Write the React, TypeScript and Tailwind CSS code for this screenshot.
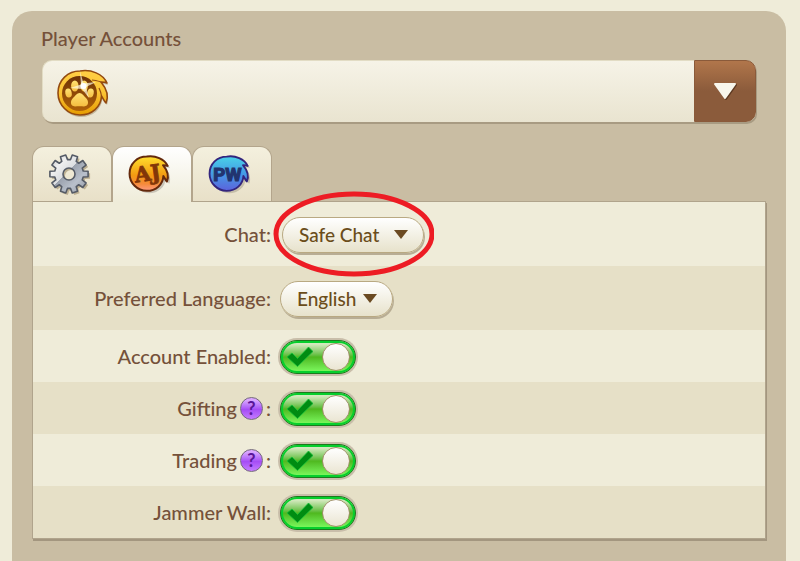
import { useState } from "react";
import type { ReactNode } from "react";

const badgePath =
  "M24 2 C35 0 47 5 51 14 C49 13 47 13 45 13 C50 19 53 27 50 34 C48 32 47 29 45.500 27 C45 38 36 46 24 46 C12 46 2 36 2 24 C2 11 12 2 24 2 Z";

function gearPath(teeth: number, outer: number, inner: number) {
  const step = (Math.PI * 2) / teeth;
  const points: string[] = [];
  for (let i = 0; i < teeth; i++) {
    const mid = i * step;
    [
      [inner, -0.33],
      [outer, -0.23],
      [outer, 0.23],
      [inner, 0.33],
    ].forEach(([r, t]) => {
      const a = mid + t * step;
      points.push(`${(r * Math.cos(a)).toFixed(2)} ${(r * Math.sin(a)).toFixed(2)}`);
    });
  }
  return `M${points.join(" L")} Z`;
}

function PawCoin() {
  return (
    <svg viewBox="0 0 54 50" className="h-[50px] w-[54px] overflow-visible" aria-hidden="true">
      <defs>
        <linearGradient id="coinRim" x1="0" y1="0" x2="0" y2="1">
          <stop offset="0" stopColor="#ffcf45" />
          <stop offset="0.5" stopColor="#fbc334" />
          <stop offset="1" stopColor="#e59c00" />
        </linearGradient>
        <linearGradient id="coinFace" x1="0" y1="0" x2="0" y2="1">
          <stop offset="0" stopColor="#6e3206" />
          <stop offset="1" stopColor="#b06208" />
        </linearGradient>
        <linearGradient id="paw" x1="0" y1="0" x2="0" y2="1">
          <stop offset="0" stopColor="#ffe273" />
          <stop offset="1" stopColor="#f5bd40" />
        </linearGradient>
      </defs>
      <path d={badgePath} fill="#b9ae92" opacity="0.8" transform="translate(1 2)" />
      <path d={badgePath} fill="url(#coinRim)" stroke="#934a10" strokeWidth="1.600" strokeLinejoin="round" />
      <path d="M45 13 C42 12 39 11 36 11 M45.500 27 C45 24 44 21 43 19" fill="none" stroke="#934a10" strokeWidth="1.200" />
      <circle cx="23.500" cy="24.500" r="17.500" fill="url(#coinFace)" />
      <g fill="url(#paw)">
        <ellipse cx="12.500" cy="24" rx="3.200" ry="4.600" transform="rotate(-10 12.500 24)" />
        <ellipse cx="18.800" cy="17" rx="3.700" ry="5.600" />
        <ellipse cx="28.200" cy="17" rx="3.700" ry="5.600" />
        <ellipse cx="34.500" cy="24" rx="3.200" ry="4.600" transform="rotate(10 34.500 24)" />
        <path d="M23.500 24 C26 24 28 27 30 29 C33 32 33 37 28 37.500 C25 37 22 37 19 37.500 C14 37 14 32 17 29 C19 27 21 24 23.500 24 Z" />
      </g>
      <path d="M24 2 L27.500 14.500 L40 13 L30 18 L33 29 L26 20 L14 19 L25 15.500 Z" fill="#fffbe2" opacity="0.7" />
      <circle cx="27.500" cy="17" r="3" fill="#fff" />
    </svg>
  );
}

function GearIcon() {
  const d = `${gearPath(10, 19.3, 14.5)} M6 0 A6 6 0 1 0 -6 0 A6 6 0 1 0 6 0 Z`;
  return (
    <svg viewBox="-21 -21 42 42" className="size-[42px] overflow-visible" aria-hidden="true">
      <defs>
        <linearGradient id="steel" x1="0" y1="0" x2="1" y2="1">
          <stop offset="0" stopColor="#b9bcc0" />
          <stop offset="0.25" stopColor="#f0f0f0" />
          <stop offset="0.45" stopColor="#dcdee1" />
          <stop offset="0.46" stopColor="#9ba2ae" />
          <stop offset="0.7" stopColor="#b9c0cb" />
          <stop offset="1" stopColor="#8a919e" />
        </linearGradient>
      </defs>
      <path d={d} fill="#bdb092" fillRule="evenodd" transform="translate(2 2)" />
      <path d={d} fill="url(#steel)" fillRule="evenodd" stroke="#555b66" strokeWidth="1.600" strokeLinejoin="round" />
    </svg>
  );
}

function JamIcon() {
  return (
    <svg viewBox="0 0 54 50" className="h-[39px] w-[42px] overflow-visible" aria-hidden="true">
      <defs>
        <linearGradient id="jam" x1="0" y1="0" x2="0" y2="1">
          <stop offset="0" stopColor="#ffe02e" />
          <stop offset="0.55" stopColor="#f39a12" />
          <stop offset="0.8" stopColor="#f58a3a" />
          <stop offset="1" stopColor="#ff9c84" />
        </linearGradient>
      </defs>
      <path d={badgePath} fill="#c9c5b8" transform="translate(3 3)" />
      <path d={badgePath} fill="url(#jam)" stroke="#64290c" strokeWidth="2.600" strokeLinejoin="round" />
      <text
        textAnchor="middle"
        fill="#823608"
        stroke="#823608"
        strokeWidth="1"
        transform="rotate(-8 25 24)"
        className="font-['DejaVu_Serif',serif] text-[27px] font-bold"
        x="25"
        y="33"
      >
        AJ
      </text>
    </svg>
  );
}

function PlayWildIcon() {
  return (
    <svg viewBox="0 0 54 50" className="h-[39px] w-[42px] overflow-visible" aria-hidden="true">
      <defs>
        <linearGradient id="wild" x1="0" y1="0" x2="0" y2="1">
          <stop offset="0" stopColor="#49d3e8" />
          <stop offset="0.5" stopColor="#459be6" />
          <stop offset="1" stopColor="#5c62dc" />
        </linearGradient>
      </defs>
      <path d={badgePath} fill="#c6bfa9" transform="translate(3 3)" />
      <path d={badgePath} fill="url(#wild)" stroke="#33257d" strokeWidth="2.400" strokeLinejoin="round" />
      <text
        x="25"
        y="33"
        textAnchor="middle"
        fill="#22346f"
        stroke="#22346f"
        strokeWidth="1.500"
        className="font-['Roboto',sans-serif] text-2xl font-bold"
      >
        PW
      </text>
    </svg>
  );
}

function PillSelect({ id, options, className }: { id: string; options: string[]; className: string }) {
  return (
    <div className="relative">
      <select
        id={id}
        className={`block h-9 appearance-none rounded-full border border-[#b9a982] bg-linear-to-b from-white to-[#e7e2cb] pl-4 font-['Lato',sans-serif] text-[19px] leading-6 text-[#6b4d1a] shadow-[1px_2px_0_#b8ad94] ${className}`}
      >
        {options.map((option) => (
          <option key={option}>{option}</option>
        ))}
      </select>
      <svg viewBox="0 0 14 9" className="pointer-events-none absolute top-[13px] right-4 h-[9px] w-[14px]" aria-hidden="true">
        <path d="M0 0 H14 L7 9 Z" fill="#6b4a22" />
      </svg>
    </div>
  );
}

function Toggle({ id }: { id: string }) {
  return (
    <div className="relative h-[34px] w-[76px]">
      <input
        id={id}
        type="checkbox"
        role="switch"
        defaultChecked
        className="peer block h-full w-full appearance-none rounded-full border border-[#8f8468] bg-[#d8d0b6] ring-2 ring-[#c9beaa] checked:border-[#1c7a1c] checked:bg-linear-to-b checked:from-[#d3e9bd] checked:from-10% checked:via-[#4fb81e] checked:via-50% checked:to-[#80ff62] checked:shadow-[inset_0_0_0_2px_#06cf2d]"
      />
      <svg viewBox="0 0 26 20" className="pointer-events-none invisible absolute top-[7px] left-[7px] h-5 w-[26px] peer-checked:visible" aria-hidden="true">
        <path d="M0 10 L5 6 L10.500 11.500 L21.500 0 L26 4.500 L10.500 19.500 Z" fill="#008c12" stroke="#18c43c" strokeWidth="0.800" />
      </svg>
      <span className="pointer-events-none absolute top-[3px] left-[6px] size-7 rounded-full border border-[#a08f68] bg-linear-to-b from-white to-[#eae5d2] peer-checked:right-[6px] peer-checked:left-auto" />
    </div>
  );
}

function HelpButton({ topic }: { topic: string }) {
  return (
    <button
      type="button"
      aria-label={`About ${topic}`}
      className="mx-[3px] flex size-[23px] items-center justify-center rounded-full border border-[#74697c] bg-linear-to-b from-[#d9a6ff] from-10% via-[#a64df5] via-55% to-[#c47aff] text-lg leading-none font-bold text-[#5a1699]"
    >
      ?
    </button>
  );
}

function Row({ id, label, help, tall, children }: { id: string; label: string; help?: boolean; tall?: boolean; children: ReactNode }) {
  return (
    <div className={`flex items-center gap-[9px] pt-[2px] odd:bg-[#efecd9] even:bg-[#e6e0c7] ${tall ? "h-16" : "h-[52px]"}`}>
      <div className="flex w-[238px] shrink-0 items-center justify-end pb-[2px]">
        <label htmlFor={id}>
          {label}
          {!help && ":"}
        </label>
        {help && (
          <>
            <HelpButton topic={label} />
            <span>:</span>
          </>
        )}
      </div>
      {children}
    </div>
  );
}

const tabs = [
  { name: "Settings", icon: <GearIcon /> },
  { name: "Animal Jam", icon: <JamIcon /> },
  { name: "Play Wild", icon: <PlayWildIcon /> },
];

export default function App() {
  const [active, setActive] = useState(1);

  return (
    <div className="min-h-screen bg-[#efecd9] pt-[11px] pr-[14px] pl-3 font-['Lato',sans-serif] text-xl leading-6 font-medium text-[#75513a]">
      <main className="min-h-[550px] rounded-t-[20px] bg-[#c9bda3] px-5 pt-[15px] pb-5">
        <label htmlFor="account" className="mb-[10px] ml-[9px] block">
          Player Accounts
        </label>
        <div className="relative mx-[10px]">
          <select
            id="account"
            className="block h-[62px] w-full appearance-none rounded-[10px] border-t border-l border-[#e2dcc4] bg-linear-to-b from-[#f6f3e7] to-[#e9e4d0] shadow-[1px_2px_0_#a89b82]"
          >
            <option value="paw" aria-label="Paw account"></option>
          </select>
          <div className="pointer-events-none absolute inset-y-0 left-[14px] flex items-center pt-[6px]">
            <PawCoin />
          </div>
          <div className="pointer-events-none absolute inset-y-0 right-0 flex w-[62px] items-center justify-center rounded-r-[10px] border border-[#8a5a3a] bg-linear-to-b from-[#b1764b] to-[#8b5b3b] to-50%">
            <svg viewBox="0 0 24 18" className="h-[18px] w-6 overflow-visible" aria-hidden="true">
              <path d="M2 2 H22 L12 16 Z" fill="#5d3a22" stroke="#5d3a22" strokeWidth="2" strokeLinejoin="round" transform="translate(1 1)" />
              <path d="M2 2 H22 L12 16 Z" fill="#f8f6ec" stroke="#f8f6ec" strokeWidth="2" strokeLinejoin="round" />
            </svg>
          </div>
        </div>

        <div role="tablist" className="mt-6 flex">
          {tabs.map((tab, i) => (
            <button
              key={tab.name}
              type="button"
              role="tab"
              aria-label={tab.name}
              aria-selected={i === active}
              onClick={() => setActive(i)}
              className={`flex w-20 items-center justify-center rounded-t-xl border border-b-0 border-[#b3a58c] bg-linear-to-b pr-[7px] ${
                i === active ? "relative -mb-px h-14 from-white to-[#efecd9]" : "h-[55px] from-[#f4f0de] to-[#e8e0c8]"
              }`}
            >
              {tab.icon}
            </button>
          ))}
        </div>

        <div className="border border-[#b0a48c] shadow-[1px_2px_0_#a3967f]">
          <Row id="chat" label="Chat" tall>
            <div className="relative ml-[2px]">
              <PillSelect id="chat" options={["Safe Chat", "Free Chat", "No Chat"]} className="w-[142px]" />
              <svg viewBox="0 0 162 86" className="pointer-events-none absolute -top-[26px] -left-[10px] h-[86px] w-[162px]" aria-hidden="true">
                <ellipse cx="82" cy="43" rx="78" ry="40" fill="none" stroke="#ed1c24" strokeWidth="5" />
              </svg>
            </div>
          </Row>
          <Row id="language" label="Preferred Language" tall>
            <PillSelect id="language" options={["English", "Deutsch", "Español"]} className="w-[113px]" />
          </Row>
          <Row id="enabled" label="Account Enabled">
            <Toggle id="enabled" />
          </Row>
          <Row id="gifting" label="Gifting" help>
            <Toggle id="gifting" />
          </Row>
          <Row id="trading" label="Trading" help>
            <Toggle id="trading" />
          </Row>
          <Row id="wall" label="Jammer Wall">
            <Toggle id="wall" />
          </Row>
        </div>
      </main>
    </div>
  );
}
